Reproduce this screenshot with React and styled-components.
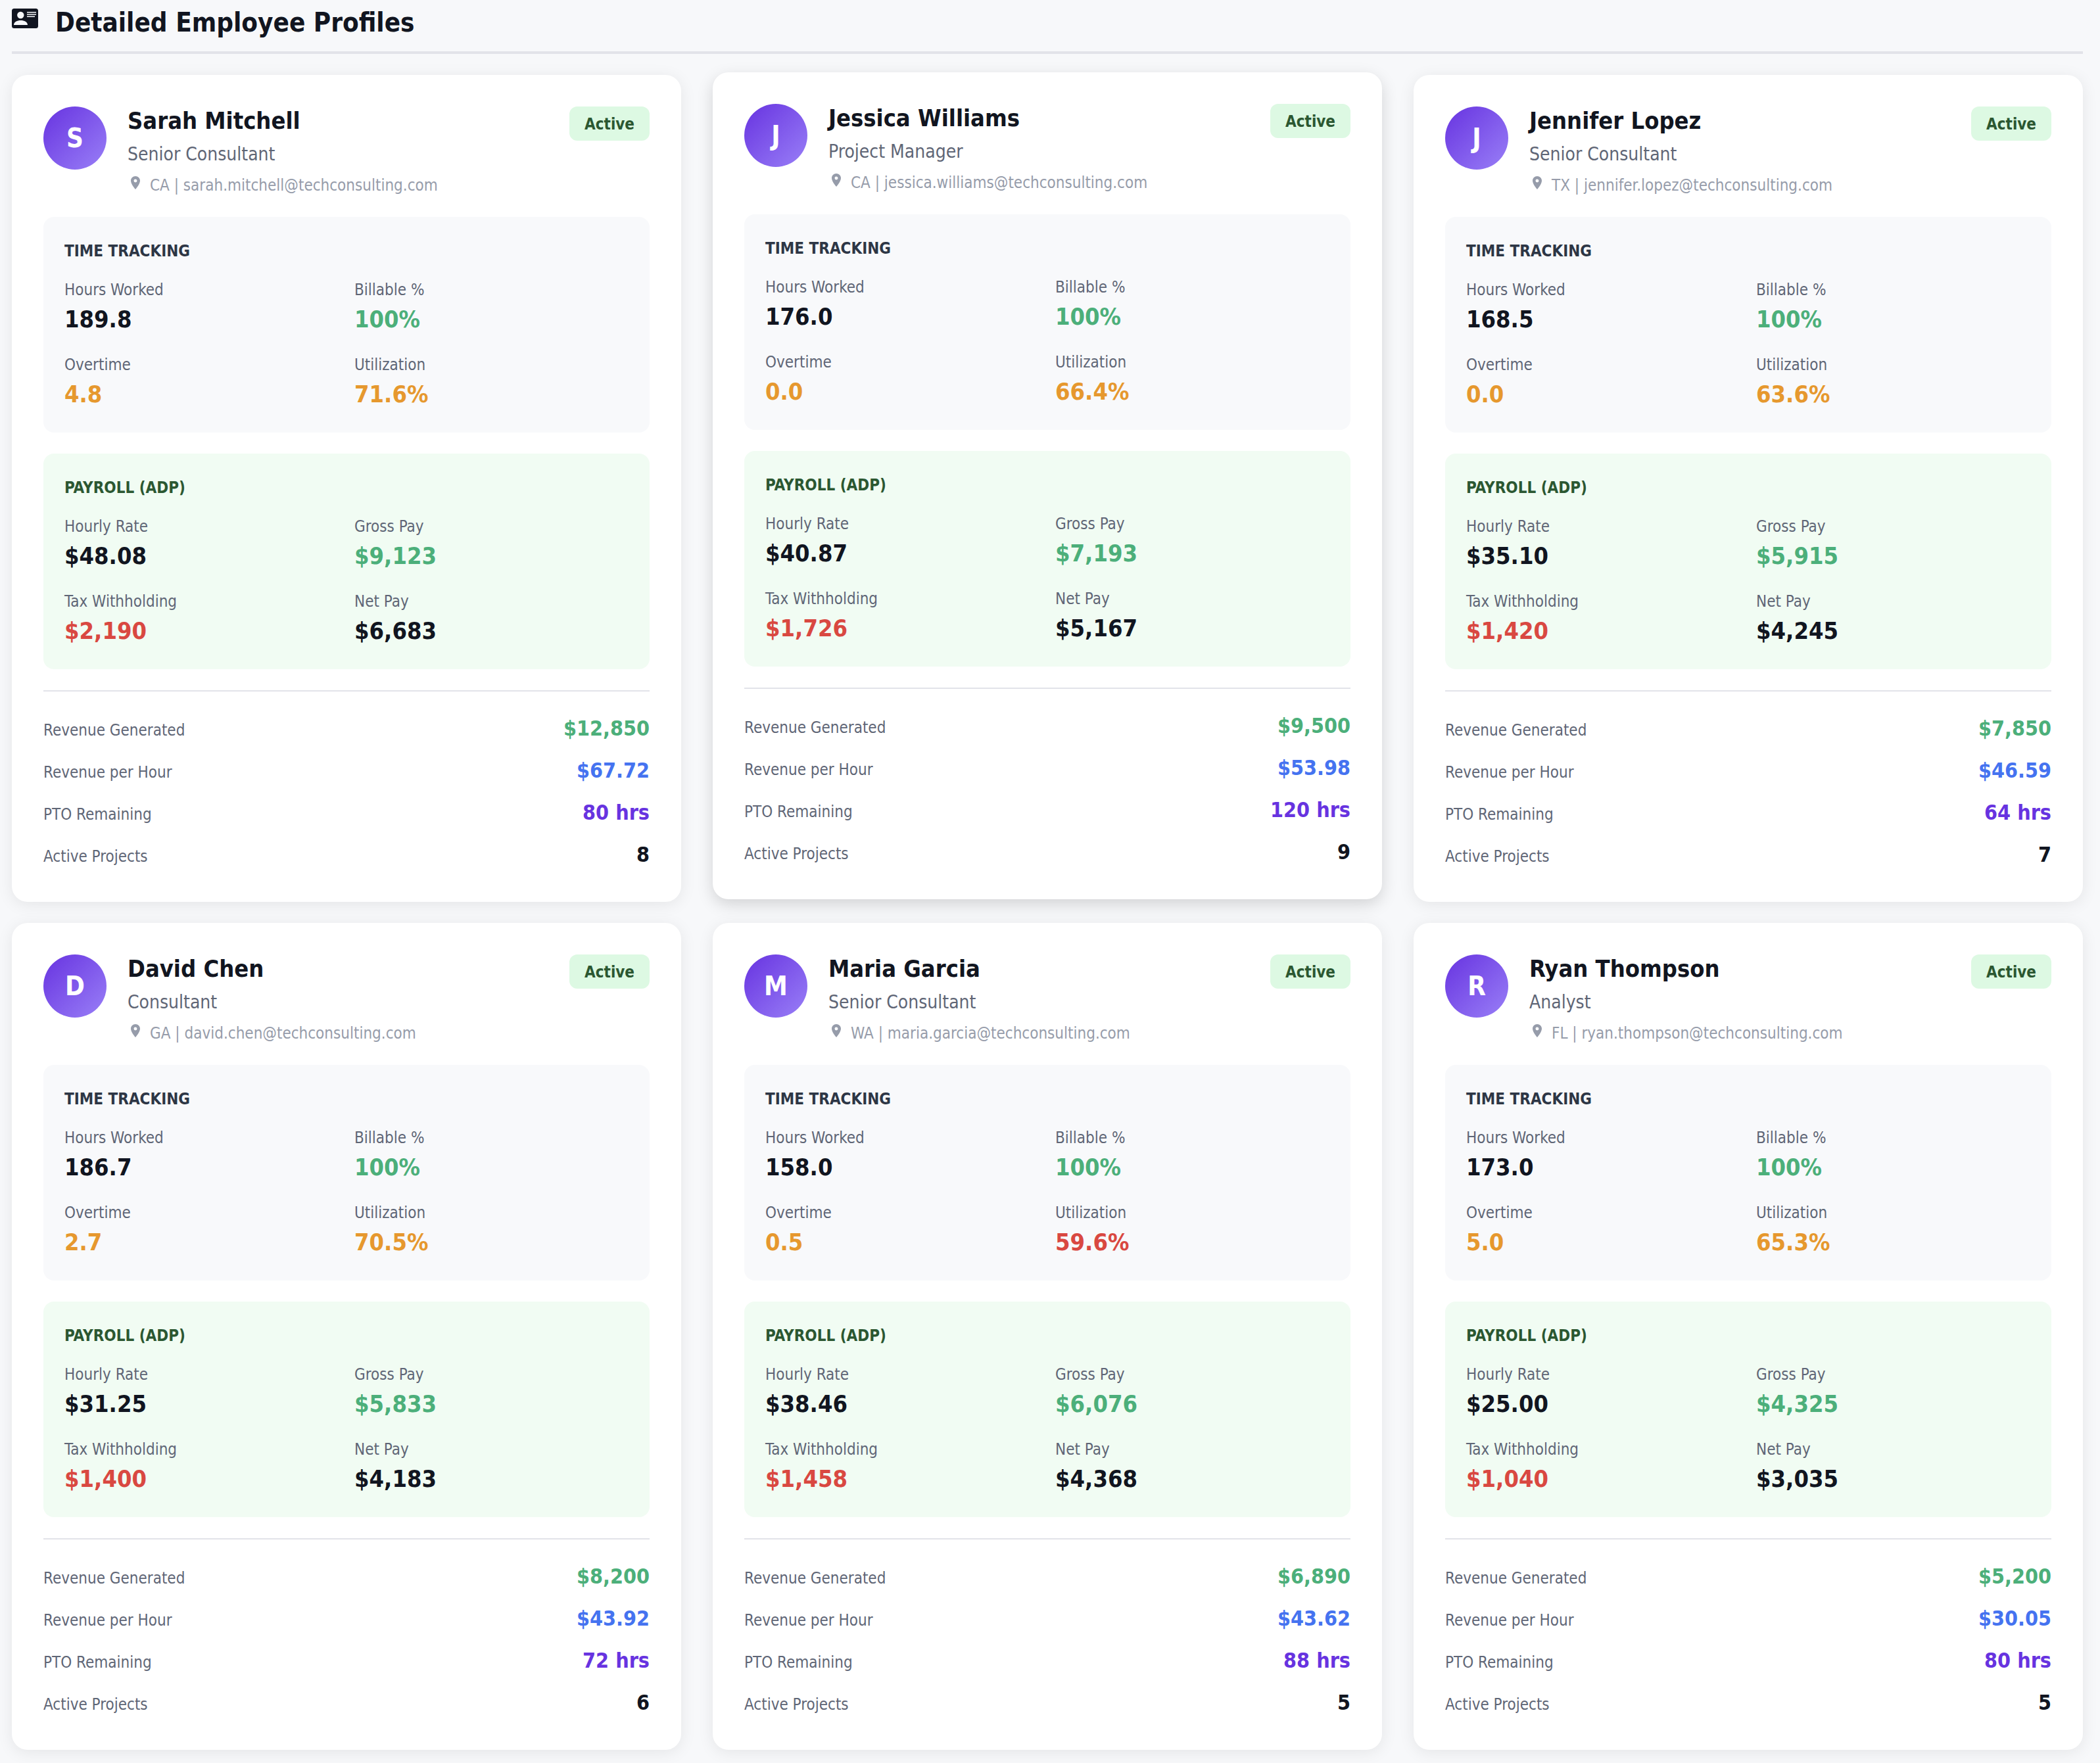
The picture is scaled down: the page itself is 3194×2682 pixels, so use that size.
import styled, { createGlobalStyle } from "styled-components";

const colors = {
  ink: "#111520",
  muted: "#5f6676",
  green: "#4caf7a",
  orange: "#e6982e",
  red: "#d94841",
  blue: "#4573f0",
  purple: "#6733e0",
};

const employees = [
  {
    name: "Sarah Mitchell",
    role: "Senior Consultant",
    state: "CA",
    email: "sarah.mitchell@techconsulting.com",
    hours: "189.8",
    overtime: "4.8",
    utilization: "71.6%",
    rate: "$48.08",
    gross: "$9,123",
    tax: "$2,190",
    net: "$6,683",
    revenue: "$12,850",
    perHour: "$67.72",
    pto: "80 hrs",
    projects: 8,
  },
  {
    name: "Jessica Williams",
    role: "Project Manager",
    state: "CA",
    email: "jessica.williams@techconsulting.com",
    hours: "176.0",
    overtime: "0.0",
    utilization: "66.4%",
    rate: "$40.87",
    gross: "$7,193",
    tax: "$1,726",
    net: "$5,167",
    revenue: "$9,500",
    perHour: "$53.98",
    pto: "120 hrs",
    projects: 9,
    raised: true,
  },
  {
    name: "Jennifer Lopez",
    role: "Senior Consultant",
    state: "TX",
    email: "jennifer.lopez@techconsulting.com",
    hours: "168.5",
    overtime: "0.0",
    utilization: "63.6%",
    rate: "$35.10",
    gross: "$5,915",
    tax: "$1,420",
    net: "$4,245",
    revenue: "$7,850",
    perHour: "$46.59",
    pto: "64 hrs",
    projects: 7,
  },
  {
    name: "David Chen",
    role: "Consultant",
    state: "GA",
    email: "david.chen@techconsulting.com",
    hours: "186.7",
    overtime: "2.7",
    utilization: "70.5%",
    rate: "$31.25",
    gross: "$5,833",
    tax: "$1,400",
    net: "$4,183",
    revenue: "$8,200",
    perHour: "$43.92",
    pto: "72 hrs",
    projects: 6,
  },
  {
    name: "Maria Garcia",
    role: "Senior Consultant",
    state: "WA",
    email: "maria.garcia@techconsulting.com",
    hours: "158.0",
    overtime: "0.5",
    utilization: "59.6%",
    rate: "$38.46",
    gross: "$6,076",
    tax: "$1,458",
    net: "$4,368",
    revenue: "$6,890",
    perHour: "$43.62",
    pto: "88 hrs",
    projects: 5,
  },
  {
    name: "Ryan Thompson",
    role: "Analyst",
    state: "FL",
    email: "ryan.thompson@techconsulting.com",
    hours: "173.0",
    overtime: "5.0",
    utilization: "65.3%",
    rate: "$25.00",
    gross: "$4,325",
    tax: "$1,040",
    net: "$3,035",
    revenue: "$5,200",
    perHour: "$30.05",
    pto: "80 hrs",
    projects: 5,
  },
];

const Metric = ({ label, value, color }) => (
  <div>
    <MetricLabel>{label}</MetricLabel>
    <MetricValue $color={color}>{value}</MetricValue>
  </div>
);

const Summary = ({ label, value, color }) => (
  <SummaryRow>
    <SummaryLabel>{label}</SummaryLabel>
    <SummaryValue $color={color}>{value}</SummaryValue>
  </SummaryRow>
);

const EmployeeCard = ({ employee }) => {
  // Utilization under 60% is flagged in red.
  const utilizationColor =
    parseFloat(employee.utilization) < 60 ? colors.red : colors.orange;

  return (
    <Card $raised={employee.raised}>
      <CardHeader>
        <Avatar>{employee.name[0]}</Avatar>
        <Identity>
          <Name>{employee.name}</Name>
          <Role>{employee.role}</Role>
          <Contact>
            <PinIcon viewBox="0 0 24 24" aria-hidden="true">
              <path d="M12 2C8.13 2 5 5.13 5 9c0 5.25 7 13 7 13s7-7.75 7-13c0-3.87-3.13-7-7-7zm0 9.5a2.5 2.5 0 0 1 0-5 2.5 2.5 0 0 1 0 5z" />
            </PinIcon>
            {employee.state} | {employee.email}
          </Contact>
        </Identity>
        <Badge>Active</Badge>
      </CardHeader>

      <Panel $background="#f8f9fb">
        <PanelTitle $color="#2d3645">TIME TRACKING</PanelTitle>
        <Metrics>
          <Metric label="Hours Worked" value={employee.hours} />
          <Metric label="Billable %" value="100%" color={colors.green} />
          <Metric
            label="Overtime"
            value={employee.overtime}
            color={colors.orange}
          />
          <Metric
            label="Utilization"
            value={employee.utilization}
            color={utilizationColor}
          />
        </Metrics>
      </Panel>

      <Panel $background="#f1fcf3">
        <PanelTitle $color="#2b5731">PAYROLL (ADP)</PanelTitle>
        <Metrics>
          <Metric label="Hourly Rate" value={employee.rate} />
          <Metric
            label="Gross Pay"
            value={employee.gross}
            color={colors.green}
          />
          <Metric
            label="Tax Withholding"
            value={employee.tax}
            color={colors.red}
          />
          <Metric label="Net Pay" value={employee.net} />
        </Metrics>
      </Panel>

      <CardFooter>
        <Summary
          label="Revenue Generated"
          value={employee.revenue}
          color={colors.green}
        />
        <Summary
          label="Revenue per Hour"
          value={employee.perHour}
          color={colors.blue}
        />
        <Summary
          label="PTO Remaining"
          value={employee.pto}
          color={colors.purple}
        />
        <Summary label="Active Projects" value={employee.projects} />
      </CardFooter>
    </Card>
  );
};

const App = () => (
  <Page>
    <GlobalStyle />
    <PageHeader>
      <ContactCardIcon viewBox="0 0 40 30" aria-hidden="true">
        <path
          fillRule="evenodd"
          d="M3.5 0H36.5Q40 0 40 3.5V26.5Q40 30 36.5 30H3.5Q0 30 0 26.5V3.5Q0 0 3.5 0ZM13.3 4.8A5.2 5.2 0 0 0 13.3 15.2A5.2 5.2 0 0 0 13.3 4.8ZM3 25H24C24 20.5 19 18 13.5 18C8 18 3 20.5 3 25ZM23 5H37V6.5H23ZM23 8.2H37V9.7H23ZM23 11.6H35V13.1H23Z"
        />
      </ContactCardIcon>
      <PageTitle>Detailed Employee Profiles</PageTitle>
    </PageHeader>
    <Cards>
      {employees.map((employee) => (
        <EmployeeCard key={employee.name} employee={employee} />
      ))}
    </Cards>
  </Page>
);

export default App;

// Styling
const GlobalStyle = createGlobalStyle`
  * {
    box-sizing: border-box;
  }
  body {
    margin: 0;
    background: #f7f8fa;
    color: ${colors.ink};
    font-family: Tahoma, "DejaVu Sans Condensed", "DejaVu Sans", sans-serif;
    font-size: 24px;
    line-height: 36px;
  }
  h1, h2, h3, p, dl, dd {
    margin: 0;
  }
`;
const Page = styled.main`
  padding: 0 26px 20px 18px;
`;
const PageHeader = styled.header`
  display: flex;
  align-items: flex-start;
  gap: 26px;
  padding-bottom: 14px;
  margin-bottom: 32px;
  border-bottom: 4px solid #e2e3e9;
`;
const ContactCardIcon = styled.svg`
  width: 40px;
  height: 30px;
  margin-top: 13px;
  fill: ${colors.ink};
`;
const PageTitle = styled.h1`
  padding-top: 4px;
  font-size: 40px;
  line-height: 60px;
`;
const Cards = styled.div`
  display: grid;
  grid-template-columns: repeat(3, minmax(0, 1fr));
  gap: 32px 48px;
`;
const Card = styled.article`
  padding: 48px;
  border-radius: 24px;
  background: white;
  box-shadow: ${(props) =>
    props.$raised
      ? "0 8px 24px rgba(0, 0, 0, 0.15)"
      : "0 4px 24px rgba(0, 0, 0, 0.08)"};
  transform: ${(props) => (props.$raised ? "translateY(-4px)" : "none")};
`;
const CardHeader = styled.header`
  display: flex;
  align-items: flex-start;
  gap: 32px;
  margin-bottom: 30px;
`;
const Avatar = styled.div`
  display: flex;
  flex: none;
  align-items: center;
  justify-content: center;
  width: 96px;
  height: 96px;
  border-radius: 50%;
  background: linear-gradient(135deg, #6733e0, #997ff7);
  color: white;
  font-size: 40px;
  font-weight: bold;
`;
const Identity = styled.div`
  flex: 1;
  min-width: 0;
`;
const Name = styled.h2`
  margin-bottom: 8px;
  font-size: 36px;
  line-height: 44px;
`;
const Role = styled.p`
  margin-bottom: 8px;
  color: ${colors.muted};
  font-size: 28px;
  line-height: 42px;
`;
const Contact = styled.p`
  display: flex;
  align-items: flex-start;
  gap: 10px;
  color: #969caa;
`;
const PinIcon = styled.svg`
  width: 24px;
  height: 24px;
  margin-top: 2px;
  fill: currentColor;
`;
const Badge = styled.span`
  padding: 13px 23px 11px;
  border-radius: 12px;
  background: #ddf9e3;
  color: #2b5731;
  font-weight: bold;
  line-height: 28px;
`;
const Panel = styled.section`
  margin-bottom: 32px;
  padding: 32px;
  border-radius: 16px;
  background: ${(props) => props.$background};
`;
const PanelTitle = styled.h3`
  margin-bottom: 20px;
  color: ${(props) => props.$color};
  font-size: 24px;
  line-height: 40px;
`;
const Metrics = styled.dl`
  display: grid;
  grid-template-columns: 1fr 1fr;
  gap: 24px;
`;
const MetricLabel = styled.dt`
  color: ${colors.muted};
  line-height: 38px;
`;
const MetricValue = styled.dd`
  color: ${(props) => props.$color || colors.ink};
  font-size: 36px;
  font-weight: bold;
  line-height: 52px;
`;
const CardFooter = styled.dl`
  display: grid;
  gap: 16px;
  padding-top: 32px;
  border-top: 2px solid #e2e3e9;
`;
const SummaryRow = styled.div`
  display: flex;
  align-items: baseline;
  justify-content: space-between;
`;
const SummaryLabel = styled.dt`
  color: ${colors.muted};
`;
const SummaryValue = styled.dd`
  color: ${(props) => props.$color || colors.ink};
  font-size: 32px;
  font-weight: bold;
  line-height: 48px;
`;
